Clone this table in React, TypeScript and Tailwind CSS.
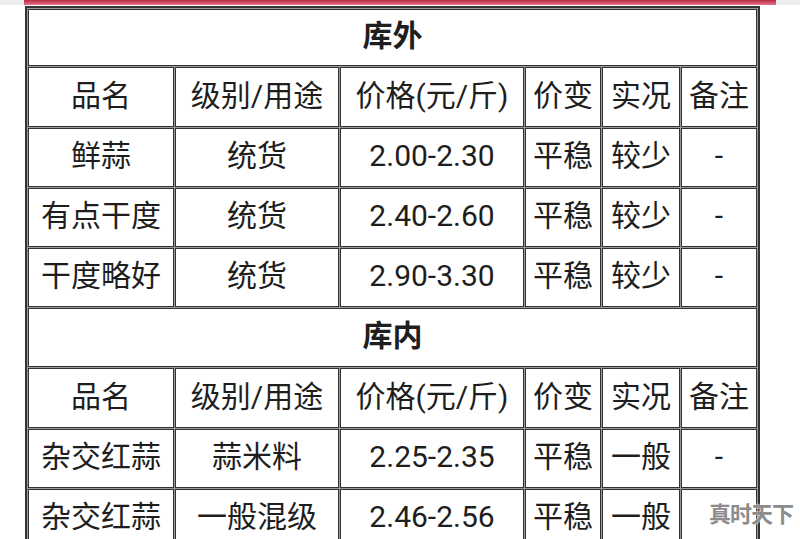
const outside = [
  ['鲜蒜', '统货', '2.00-2.30', '平稳', '较少', '-'],
  ['有点干度', '统货', '2.40-2.60', '平稳', '较少', '-'],
  ['干度略好', '统货', '2.90-3.30', '平稳', '较少', '-'],
];

const inside = [
  ['杂交红蒜', '蒜米料', '2.25-2.35', '平稳', '一般', '-'],
  ['杂交红蒜', '一般混级', '2.46-2.56', '平稳', '一般', '-'],
];

const header = ['品名', '级别/用途', '价格(元/斤)', '价变', '实况', '备注'];

const cell = 'border-[1.5px] border-[#333] bg-white p-0 pb-[4px] text-center whitespace-nowrap';

function Section({ title, rows, first }: { title: string; rows: string[][]; first?: boolean }) {
  return (
    <>
      <tr className={first ? 'h-[57px]' : 'h-[59px]'}>
        <td colSpan={6} className={cell + ' font-bold'}>
          {title}
        </td>
      </tr>
      <tr className="h-[60px]">
        {header.map((h, i) => (
          <td key={i} className={cell}>
            {h}
          </td>
        ))}
      </tr>
      {rows.map((r, ri) => (
        <tr key={ri} className="h-[59px]">
          {r.map((c, ci) => (
            <td key={ci} className={cell}>
              {c}
            </td>
          ))}
        </tr>
      ))}
    </>
  );
}

export default function App() {
  return (
    <div
      className="relative h-[539px] w-[800px] overflow-hidden bg-white text-[#1e1e1e] text-[30px]"
      style={{ fontFamily: 'Roboto, "Noto Sans CJK SC", sans-serif' }}
    >
      <div className="flex h-[5px] bg-[#ececec]">
        <div className="ml-[24px] w-[752px] bg-gradient-to-b from-[#b52a48] to-[#e9718b]" />
      </div>
      <table
        className="ml-[25px] mt-px table-fixed border-separate border-[2px] border-[#333] bg-[#9a9a9a] w-[730px]"
        style={{ borderSpacing: '1px' }}
      >
        <colgroup>
          <col className="w-[146px]" />
          <col className="w-[164px]" />
          <col className="w-[184px]" />
          <col className="w-[76px]" />
          <col className="w-[78px]" />
          <col className="w-[76px]" />
        </colgroup>
        <tbody>
          <Section title="库外" rows={outside} first />
          <Section title="库内" rows={inside} />
        </tbody>
      </table>
      <div
        className="absolute right-[7px] bottom-[8px] text-[22px] font-bold text-[#8c8c8c] tracking-[-1px]"
        style={{ textShadow: '0 0 2px #fff, 0 0 2px #fff' }}
      >
        真时天下
      </div>
    </div>
  );
}
